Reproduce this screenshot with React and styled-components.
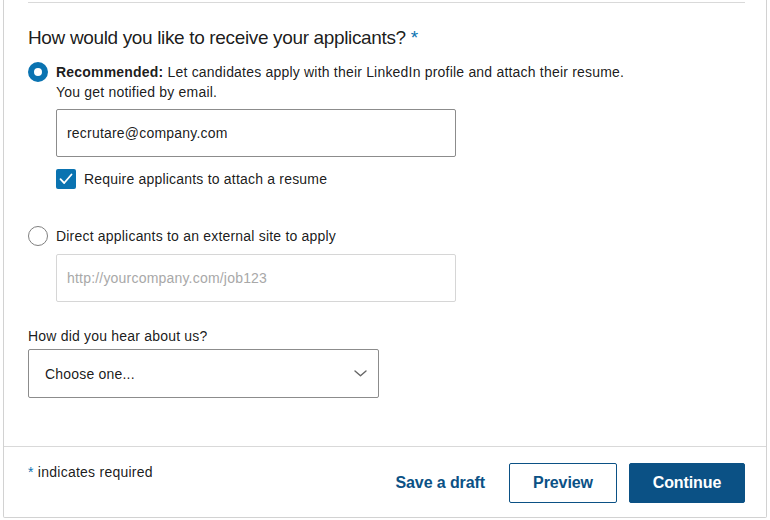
import React from 'react'
import styled, { createGlobalStyle } from 'styled-components'

const GlobalStyle = createGlobalStyle`
  html, body {
    margin: 0;
    padding: 0;
    background: #ffffff;
  }
  body {
    font-family: "Liberation Sans", Arial, sans-serif;
    color: rgba(0, 0, 0, 0.9);
  }
`

const Page = styled.div`
  padding: 0 3px 2px 3px;
  width: 770px;
  box-sizing: border-box;
`

const Card = styled.section`
  border: 1px solid #d2d2d2;
  border-top: none;
  border-radius: 0 0 2px 2px;
  background: #fff;
`

const Body = styled.div`
  padding: 2px 21px 0 24px;
`

const Divider = styled.hr`
  margin: 0;
  border: none;
  border-top: 1px solid #d9d9d9;
`

const Heading = styled.h2`
  margin: 23px 0 12px;
  font-size: 19px;
  letter-spacing: -0.35px;
  line-height: 24px;
  font-weight: 400;
`

const Star = styled.span`
  color: #0a73b1;
`

const Option = styled.label`
  display: flex;
  align-items: flex-start;
  gap: 8px;
  font-size: 14px;
  letter-spacing: 0.2px;
  line-height: 20px;
  margin-top: ${p => p.$top || 0}px;
`

const Radio = styled.span`
  flex: none;
  width: 20px;
  height: 20px;
  box-sizing: border-box;
  border-radius: 50%;
  background: #fff;
  border: ${p => (p.$checked ? '6px solid #0a73b1' : '1.5px solid #7f7f7f')};
`

const Nested = styled.div`
  padding-left: 28px;
`

const Input = styled.div`
  width: 400px;
  height: 48px;
  box-sizing: border-box;
  border: 1px solid ${p => (p.$disabled ? '#d6d6d6' : '#8c8c8c')};
  border-radius: 2px;
  padding: 0 10px;
  display: flex;
  align-items: center;
  font-size: 14px;
  letter-spacing: 0.2px;
  color: ${p => (p.$disabled ? '#a8a8a8' : 'rgba(0,0,0,0.9)')};
  margin-top: ${p => p.$top}px;
`

const CheckRow = styled.div`
  display: flex;
  align-items: center;
  gap: 8px;
  margin-top: 12px;
  font-size: 14px;
  letter-spacing: 0.2px;
  line-height: 20px;
`

const CheckBox = styled.span`
  width: 20px;
  height: 20px;
  border-radius: 2px;
  background: #0a73b1;
  display: flex;
  align-items: center;
  justify-content: center;
`

const FieldLabel = styled.div`
  margin-top: 24px;
  font-size: 14px;
  letter-spacing: 0.2px;
  line-height: 20px;
`

const Select = styled.div`
  margin-top: 3px;
  width: 351px;
  height: 49px;
  box-sizing: border-box;
  border: 1px solid #8c8c8c;
  border-radius: 2px;
  padding: 0 11px 0 16px;
  display: flex;
  align-items: center;
  justify-content: space-between;
  font-size: 14px;
  letter-spacing: 0.2px;
  margin-bottom: 48px;
`

const Footer = styled.footer`
  border-top: 1px solid #d9d9d9;
  padding: 16px 21px 14px 24px;
  display: flex;
  justify-content: space-between;
  align-items: flex-start;
`

const Required = styled.div`
  font-size: 14px;
  letter-spacing: 0.25px;
  line-height: 20px;
  margin-top: -1px;
`

const Actions = styled.div`
  display: flex;
  align-items: center;
  gap: 12px;
`

const Button = styled.button`
  font-family: inherit;
  font-size: 16px;
  font-weight: 700;
  letter-spacing: -0.1px;
  height: 40px;
  border-radius: 2px;
  cursor: pointer;
  padding: 0;
  width: ${p => (p.$w ? `${p.$w}px` : 'auto')};
  ${p =>
    p.$variant === 'primary' &&
    `
    background: #0b5185;
    color: #fff;
    border: 1px solid #0b5185;
  `}
  ${p =>
    p.$variant === 'secondary' &&
    `
    background: #fff;
    color: #0b5185;
    border: 1px solid #0b5185;
  `}
  ${p =>
    p.$variant === 'text' &&
    `
    background: none;
    color: #0b5185;
    border: none;
    margin-right: 12px;
  `}
`

const App = () => {
  return (
    <Page>
      <GlobalStyle />
      <Card>
        <Body>
          <Divider />
          <Heading>
            How would you like to receive your applicants? <Star>*</Star>
          </Heading>
          <Option>
            <Radio $checked />
            <span>
              <b>Recommended:</b> Let candidates apply with their LinkedIn
              profile and attach their resume.
              <br />
              You get notified by email.
            </span>
          </Option>
          <Nested>
            <Input $top={7}>recrutare@company.com</Input>
            <CheckRow>
              <CheckBox>
                <svg width="14" height="12" viewBox="0 0 14 12" fill="none">
                  <path
                    d="M1.5 6.2 L5.2 10 L12.5 1.5"
                    stroke="#fff"
                    strokeWidth="1.8"
                    strokeLinecap="round"
                    strokeLinejoin="round"
                  />
                </svg>
              </CheckBox>
              Require applicants to attach a resume
            </CheckRow>
          </Nested>
          <Option $top={37}>
            <Radio />
            <span>Direct applicants to an external site to apply</span>
          </Option>
          <Nested>
            <Input $top={8} $disabled>
              http://yourcompany.com/job123
            </Input>
          </Nested>
          <FieldLabel>How did you hear about us?</FieldLabel>
          <Select>
            Choose one...
            <svg width="13" height="7" viewBox="0 0 13 7" fill="none">
              <path
                d="M1 1 L6.5 5.8 L12 1"
                stroke="#666"
                strokeWidth="1.4"
                strokeLinecap="round"
                strokeLinejoin="round"
              />
            </svg>
          </Select>
        </Body>
        <Footer>
          <Required>
            <Star>*</Star> indicates required
          </Required>
          <Actions>
            <Button $variant="text">Save a draft</Button>
            <Button $variant="secondary" $w={108}>
              Preview
            </Button>
            <Button $variant="primary" $w={116}>
              Continue
            </Button>
          </Actions>
        </Footer>
      </Card>
    </Page>
  )
}

export default App
